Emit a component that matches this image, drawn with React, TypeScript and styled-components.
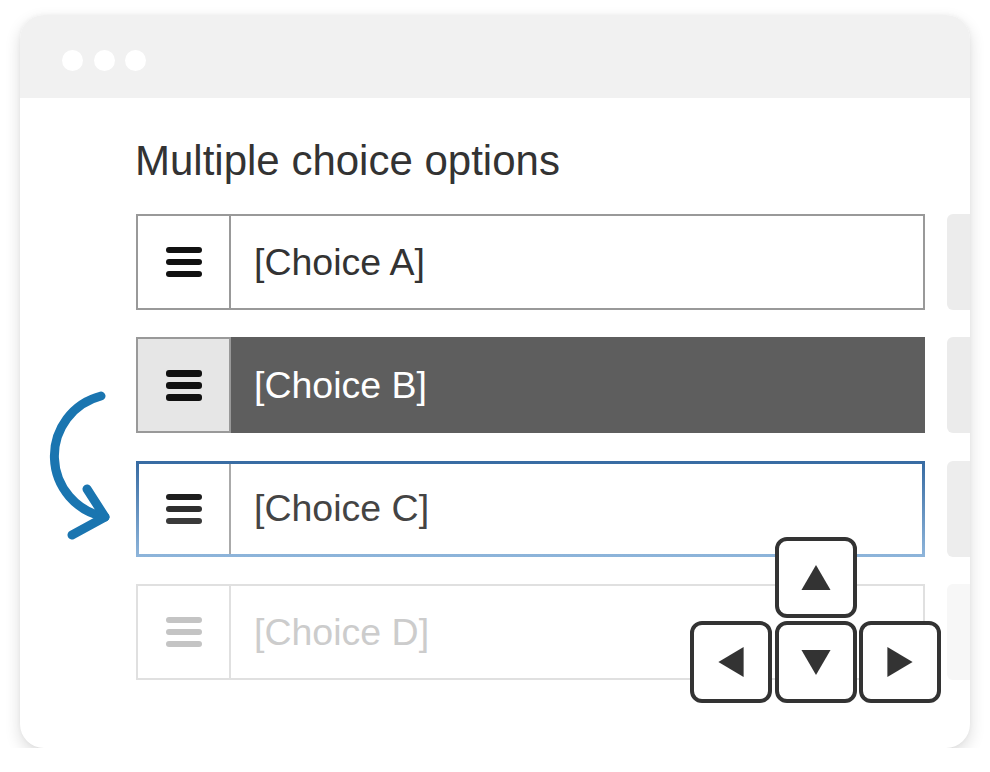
import React from "react";
import styled, { createGlobalStyle, css } from "styled-components";

const Global = createGlobalStyle`
  html, body { margin: 0; padding: 0; background: #ffffff; }
  body { font-family: "Liberation Sans", Arial, Helvetica, sans-serif; }
`;

type Variant = "default" | "dragging" | "target" | "disabled";

const palette: Record<Variant, { handleBorder: string; handleBg: string; textBorder: string; textBg: string; text: string; bars: string[]; side: string }> = {
  default: { handleBorder: "#999999", handleBg: "#ffffff", textBorder: "#999999", textBg: "#ffffff", text: "#333333", bars: ["#111", "#111", "#111"], side: "#ececec" },
  dragging: { handleBorder: "#999999", handleBg: "#e6e6e6", textBorder: "#5e5e5e", textBg: "#5e5e5e", text: "#ffffff", bars: ["#111", "#111", "#111"], side: "#ebebeb" },
  target: { handleBorder: "transparent", handleBg: "#ffffff", textBorder: "transparent", textBg: "#ffffff", text: "#444444", bars: ["#1e1e1e", "#2e2e2e", "#3a3a3a"], side: "#ededed" },
  disabled: { handleBorder: "#e0e0e0", handleBg: "#ffffff", textBorder: "#e0e0e0", textBg: "#ffffff", text: "#cccccc", bars: ["#c4c4c4", "#c4c4c4", "#c4c4c4"], side: "#f7f7f7" },
};

const Window = styled.div`
  position: relative;
  margin: 15px 0 0 20px;
  width: 950px;
  height: 733px;
  border-radius: 24px;
  background: #ffffff;
  box-shadow: 0 6px 16px rgba(0, 0, 0, 0.14), 0 0 4px rgba(0, 0, 0, 0.04);
  overflow: hidden;
  display: flex;
  flex-direction: column;
`;

const TitleBar = styled.div`
  height: 83px;
  flex: none;
  box-sizing: border-box;
  background: #f1f1f1;
  display: flex;
  align-items: center;
  gap: 10.6px;
  padding: 7px 0 0 42px;
`;

const Dot = styled.span`
  width: 21px;
  height: 21px;
  border-radius: 50%;
  background: #ffffff;
`;

const Content = styled.div`
  padding: 42px 0 0 116px;
  display: flex;
  flex-direction: column;
`;

const Title = styled.h1`
  margin: 0 0 32px -1px;
  font-size: 42px;
  line-height: 1;
  font-weight: 400;
  color: #333333;
  white-space: nowrap;
`;

const List = styled.div`
  display: flex;
  flex-direction: column;
  gap: 27.4px;
`;

const Line = styled.div`
  display: flex;
  gap: 22px;
`;

const Row = styled.div<{ $v: Variant }>`
  display: flex;
  width: 789px;
  height: 96px;
  flex: none;
  box-sizing: border-box;
  ${(p) =>
    p.$v === "target" &&
    css`
      border: 3px solid #5b8cbf;
      border-image: linear-gradient(#386ca3, #8db4da) 1;
    `}
`;

const Handle = styled.div<{ $v: Variant }>`
  width: ${(p) => (p.$v === "target" ? 92 : 95)}px;
  flex: none;
  box-sizing: border-box;
  background: ${(p) => palette[p.$v].handleBg};
  border: 2px solid ${(p) => palette[p.$v].handleBorder};
  ${(p) =>
    p.$v === "target" &&
    css`
      border: none;
      border-right: 2px solid #aaaaaa;
    `}
  display: flex;
  align-items: center;
  justify-content: center;
`;

const Bars = styled.div`
  display: flex;
  flex-direction: column;
  gap: 5.5px;
`;

const Bar = styled.span<{ $c: string }>`
  display: block;
  width: 36px;
  height: 6.5px;
  border-radius: 3px;
  background: ${(p) => p.$c};
`;

const Label = styled.div<{ $v: Variant }>`
  flex: 1;
  box-sizing: border-box;
  background: ${(p) => palette[p.$v].textBg};
  border: 2px solid ${(p) => palette[p.$v].textBorder};
  border-left: none;
  ${(p) => p.$v === "target" && css`border: none;`}
  display: flex;
  align-items: center;
  padding-left: 23px;
  font-size: 37.5px;
  color: ${(p) => palette[p.$v].text};
  white-space: nowrap;
`;

const Side = styled.div<{ $v: Variant }>`
  width: 60px;
  height: 96px;
  flex: none;
  border-radius: 6px;
  background: ${(p) => palette[p.$v].side};
`;

const ArrowArt = styled.svg`
  position: absolute;
  left: 0;
  top: 0;
  width: 140px;
  height: 560px;
  overflow: visible;
`;

const Keys = styled.div`
  position: absolute;
  left: 670px;
  top: 522px;
  display: grid;
  grid-template-columns: repeat(3, 82px);
  grid-template-rows: 81px 82px;
  column-gap: 2.5px;
  row-gap: 2.5px;
`;

const Key = styled.div<{ $col: number; $row: number }>`
  grid-column: ${(p) => p.$col};
  grid-row: ${(p) => p.$row};
  box-sizing: border-box;
  border: 4px solid #333333;
  border-radius: 12px;
  background: #ffffff;
  display: flex;
  align-items: center;
  justify-content: center;
`;

const Tri = styled.svg`
  width: 32px;
  height: 32px;
  display: block;
`;

const triPoints: Record<string, string> = {
  up: "1,29 31,29 16,3",
  down: "1,4 31,4 16,30",
  left: "29,1 29,32 3,16.5",
  right: "3,1 3,32 29,16.5",
};

const choices: { label: string; v: Variant }[] = [
  { label: "[Choice A]", v: "default" },
  { label: "[Choice B]", v: "dragging" },
  { label: "[Choice C]", v: "target" },
  { label: "[Choice D]", v: "disabled" },
];

const keys = [
  { dir: "up", col: 2, row: 1 },
  { dir: "left", col: 1, row: 2 },
  { dir: "down", col: 2, row: 2 },
  { dir: "right", col: 3, row: 2 },
];

export default function App() {
  return (
    <>
      <Global />
      <Window>
        <TitleBar>
          <Dot />
          <Dot />
          <Dot />
        </TitleBar>
        <Content>
          <Title>Multiple choice options</Title>
          <List>
            {choices.map((c) => (
              <Line key={c.label}>
                <Row $v={c.v}>
                  <Handle $v={c.v}>
                    <Bars>
                      {palette[c.v].bars.map((b, i) => (
                        <Bar key={i} $c={b} />
                      ))}
                    </Bars>
                  </Handle>
                  <Label $v={c.v}>{c.label}</Label>
                </Row>
                <Side $v={c.v} />
              </Line>
            ))}
          </List>
        </Content>
        <ArrowArt viewBox="20 15 140 560">
          <g fill="none" stroke="#1a75b0" strokeWidth="9" strokeLinecap="round" strokeLinejoin="round">
            <path d="M101,396 A62,62 0 0 0 105,517" />
            <path d="M87,489 L105,517 L72,535" />
          </g>
        </ArrowArt>
        <Keys>
          {keys.map((k) => (
            <Key key={k.dir} $col={k.col} $row={k.row}>
              <Tri viewBox="0 0 32 33">
                <polygon points={triPoints[k.dir]} fill="#333333" />
              </Tri>
            </Key>
          ))}
        </Keys>
      </Window>
    </>
  );
}
